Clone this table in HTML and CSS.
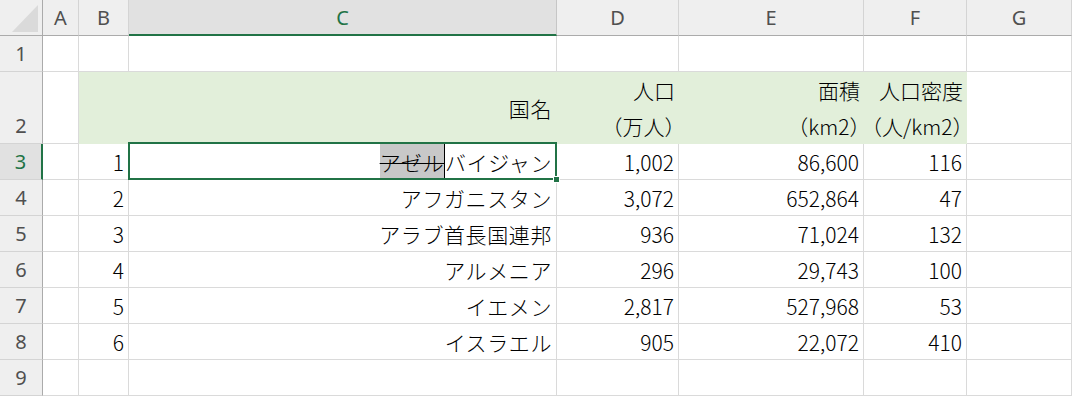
FILE: index.html
```html
<!DOCTYPE html>
<html lang="ja">
<head>
<meta charset="utf-8">
<link rel="stylesheet" href="styles.css">
</head>
<body>
<div class="sheet">
  <!-- header row -->
  <div class="corner"><svg width="42" height="35" viewBox="0 0 42 35"><polygon points="12,32 38,32 38,5" fill="#dadada"/></svg></div>
  <div class="ch">A</div>
  <div class="ch">B</div>
  <div class="ch sel">C</div>
  <div class="ch">D</div>
  <div class="ch">E</div>
  <div class="ch">F</div>
  <div class="ch">G</div>

  <!-- row 1 -->
  <div class="rh">1</div>
  <div class="c"></div><div class="c"></div><div class="c"></div><div class="c"></div><div class="c"></div><div class="c"></div><div class="c"></div>

  <!-- row 2 -->
  <div class="rh rh-bottom">2</div>
  <div class="c"></div>
  <div class="c g"></div>
  <div class="c g jp">国名</div>
  <div class="c g two"><span>人口</span><span class="unit">（万人）</span></div>
  <div class="c g two"><span>面積</span><span class="unit">（km2）</span></div>
  <div class="c g two"><span>人口密度</span><span class="unit">（人/km2）</span></div>
  <div class="c"></div>

  <!-- row 3 -->
  <div class="rh rsel">3</div>
  <div class="c"></div>
  <div class="c">1</div>
  <div class="c jp edit"><span class="hl"><s>アゼル</s></span><span class="caret"></span><span>バイジャン</span></div>
  <div class="c">1,002</div>
  <div class="c">86,600</div>
  <div class="c">116</div>
  <div class="c"></div>

  <!-- row 4 -->
  <div class="rh">4</div>
  <div class="c"></div>
  <div class="c">2</div>
  <div class="c jp">アフガニスタン</div>
  <div class="c">3,072</div>
  <div class="c">652,864</div>
  <div class="c">47</div>
  <div class="c"></div>

  <!-- row 5 -->
  <div class="rh">5</div>
  <div class="c"></div>
  <div class="c">3</div>
  <div class="c jp">アラブ首長国連邦</div>
  <div class="c">936</div>
  <div class="c">71,024</div>
  <div class="c">132</div>
  <div class="c"></div>

  <!-- row 6 -->
  <div class="rh">6</div>
  <div class="c"></div>
  <div class="c">4</div>
  <div class="c jp">アルメニア</div>
  <div class="c">296</div>
  <div class="c">29,743</div>
  <div class="c">100</div>
  <div class="c"></div>

  <!-- row 7 -->
  <div class="rh">7</div>
  <div class="c"></div>
  <div class="c">5</div>
  <div class="c jp">イエメン</div>
  <div class="c">2,817</div>
  <div class="c">527,968</div>
  <div class="c">53</div>
  <div class="c"></div>

  <!-- row 8 -->
  <div class="rh">8</div>
  <div class="c"></div>
  <div class="c">6</div>
  <div class="c jp">イスラエル</div>
  <div class="c">905</div>
  <div class="c">22,072</div>
  <div class="c">410</div>
  <div class="c"></div>

  <!-- row 9 -->
  <div class="rh">9</div>
  <div class="c"></div><div class="c"></div><div class="c"></div><div class="c"></div><div class="c"></div><div class="c"></div><div class="c"></div>

  <div class="selection"><div class="handle"></div></div>
</div>
</body>
</html>
```
FILE: styles.css
```css
* { box-sizing: border-box; }
html, body { margin: 0; padding: 0; background: #fff; }
body { width: 1072px; height: 396px; overflow: hidden; }

.sheet {
  position: relative;
  display: grid;
  grid-template-columns: 43px 36px 50px 428px 122px 185px 103px 105px;
  grid-template-rows: 36px 36px 72px repeat(7, 36px);
  font-family: "Noto Sans CJK JP", "Noto Sans", sans-serif;
  font-size: 21px;
  font-weight: 300;
  color: #000;
}

.corner {
  background: #efefef;
  border-right: 1px solid #ababab;
  border-bottom: 1px solid #ababab;
}
.corner svg { display: block; }

.ch {
  background: #efefef;
  border-right: 1px solid #d4d4d4;
  border-bottom: 1px solid #ababab;
  display: flex;
  align-items: center;
  justify-content: center;
  font-family: "Noto Sans", sans-serif;
  font-size: 20px;
  font-weight: 400;
  color: #505050;
  padding-bottom: 1px;
}
.ch.sel {
  background: #e1e1e1;
  color: #217346;
  border-bottom: 2px solid #217346;
  border-right-color: #c6c6c6;
  padding-bottom: 0;
}

.rh {
  background: #efefef;
  border-right: 1px solid #ababab;
  border-bottom: 1px solid #d4d4d4;
  display: flex;
  align-items: center;
  justify-content: center;
  font-family: "Noto Sans", sans-serif;
  font-size: 20px;
  font-weight: 400;
  color: #505050;
}
.rh-bottom { align-items: flex-end; padding-bottom: 4px; }
.rh.rsel {
  background: #e1e1e1;
  color: #217346;
  border-right: 2px solid #217346;
}

.c {
  border-right: 1px solid #dadada;
  border-bottom: 1px solid #dadada;
  display: flex;
  align-items: center;
  justify-content: flex-end;
  padding-right: 4px;
  white-space: nowrap;
}
.jp { letter-spacing: 0.6px; }

.g {
  background: #e2efda;
  border-right-color: #e2efda;
  border-bottom-color: #e2efda;
}

.two {
  flex-direction: column;
  justify-content: center;
  align-items: flex-end;
  line-height: 36px;
  padding-right: 3px;
}
.unit { font-feature-settings: "halt"; }

.edit { padding-right: 4px; align-items: stretch; }
.edit > span { display: flex; align-items: center; }
.hl { background: #c8c8c8; }
.hl s {
  text-decoration: line-through;
  text-decoration-thickness: 1px;
}
.caret {
  width: 1px;
  background: #000;
}

.selection {
  position: absolute;
  left: 128px;
  top: 142px;
  width: 429px;
  height: 38px;
  border: 2px solid #217346;
  pointer-events: none;
}
.handle {
  position: absolute;
  right: -5px;
  bottom: -5px;
  width: 7px;
  height: 7px;
  background: #217346;
  border: 1px solid #fff;
}
```
